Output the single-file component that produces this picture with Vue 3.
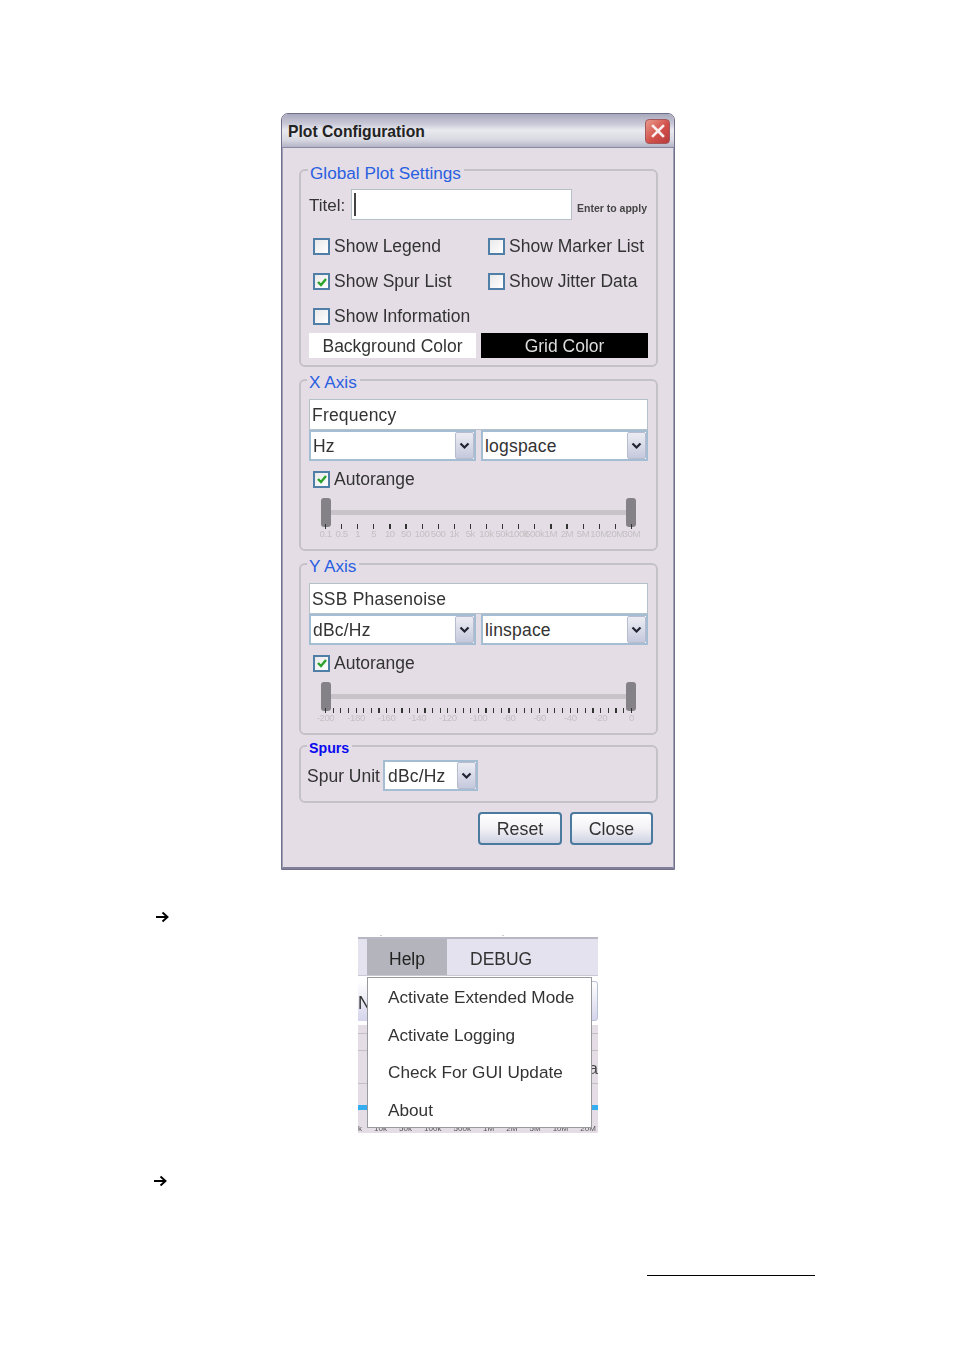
<script setup>
const xTicks = ['0.1','0.5','1','5','10','50','100','500','1k','5k','10k','50k','100k','500k','1M','2M','5M','10M','20M','30M']
const yLabels = ['-200','-180','-160','-140','-120','-100','-80','-60','-40','-20','0']
const yTicks = Array.from({ length: 41 }, (_, i) => i)
const checks = [
  { label: 'Show Legend', on: false },
  { label: 'Show Marker List', on: false },
  { label: 'Show Spur List', on: true },
  { label: 'Show Jitter Data', on: false },
  { label: 'Show Information', on: false }
]
const axisGroups = [
  { title: 'X Axis', name: 'Frequency', unit: 'Hz', scale: 'logspace', kind: 'x' },
  { title: 'Y Axis', name: 'SSB Phasenoise', unit: 'dBc/Hz', scale: 'linspace', kind: 'y' }
]
const menuItems = ['Activate Extended Mode', 'Activate Logging', 'Check For GUI Update', 'About']
const axisFrag = ['k', '10k', '50k', '100k', '500k', '1M', '2M', '5M', '10M', '20M']
</script>

<template>
  <div class="page">
    <section class="dialog">
      <header class="titlebar">
        <span class="title">Plot Configuration</span>
        <button class="close-x" aria-label="Close">
          <svg width="18" height="18" viewBox="0 0 18 18"><path d="M4 4l10 10M14 4L4 14" stroke="#fbeeee" stroke-width="2.6" stroke-linecap="square" /></svg>
        </button>
      </header>
      <div class="body">
        <fieldset class="group g-global">
          <span class="legend">Global Plot Settings</span>
          <div class="title-row">
            <span class="lbl">Titel:</span>
            <div class="field title-input"><i class="caret"></i></div>
            <span class="hint">Enter to apply</span>
          </div>
          <div class="checks">
            <label v-for="c in checks" :key="c.label" class="check">
              <span class="box">
                <svg v-if="c.on" width="12" height="12" viewBox="0 0 12 12"><path d="M2 6l3 3 5-6" fill="none" stroke="#2aa32a" stroke-width="2.4" /></svg>
              </span>
              {{ c.label }}
            </label>
          </div>
          <div class="colors">
            <div class="swatch white">Background Color</div>
            <div class="swatch black">Grid Color</div>
          </div>
        </fieldset>

        <fieldset v-for="a in axisGroups" :key="a.title" class="group g-axis">
          <span class="legend thin">{{ a.title }}</span>
          <div class="field axis-name">{{ a.name }}</div>
          <div class="selects">
            <div class="select">
              <span class="sel-text">{{ a.unit }}</span>
              <span class="sel-btn"><svg width="11" height="8" viewBox="0 0 11 8"><path d="M1.5 1.5l4 4 4-4" fill="none" stroke="#223" stroke-width="2.2" /></svg></span>
            </div>
            <div class="select">
              <span class="sel-text">{{ a.scale }}</span>
              <span class="sel-btn"><svg width="11" height="8" viewBox="0 0 11 8"><path d="M1.5 1.5l4 4 4-4" fill="none" stroke="#223" stroke-width="2.2" /></svg></span>
            </div>
          </div>
          <label class="check auto">
            <span class="box"><svg width="12" height="12" viewBox="0 0 12 12"><path d="M2 6l3 3 5-6" fill="none" stroke="#2aa32a" stroke-width="2.4" /></svg></span>
            Autorange
          </label>
          <div class="slider">
            <div class="track">
              <i class="thumb"></i>
              <i class="rail"></i>
              <i class="thumb"></i>
            </div>
            <div class="ticks">
              <template v-if="a.kind === 'x'">
                <i v-for="t in xTicks" :key="t" class="tick"></i>
              </template>
              <template v-else>
                <i v-for="t in yTicks" :key="t" class="tick"></i>
              </template>
            </div>
            <div class="tick-labels">
              <span v-for="t in (a.kind === 'x' ? xTicks : yLabels)" :key="t" class="tl"><b>{{ t }}</b></span>
            </div>
          </div>
        </fieldset>

        <fieldset class="group g-spurs">
          <span class="legend bold">Spurs</span>
          <div class="spur-row">
            <span class="lbl">Spur Unit</span>
            <div class="select spur-select">
              <span class="sel-text">dBc/Hz</span>
              <span class="sel-btn"><svg width="11" height="8" viewBox="0 0 11 8"><path d="M1.5 1.5l4 4 4-4" fill="none" stroke="#223" stroke-width="2.2" /></svg></span>
            </div>
          </div>
        </fieldset>

        <div class="actions">
          <button class="btn">Reset</button>
          <button class="btn">Close</button>
        </div>
      </div>
    </section>

    <div class="arrow first">
      <svg width="14" height="12" viewBox="0 0 14 12"><path d="M1 6h11M7.5 1.5L12.5 6l-5 4.5" fill="none" stroke="#000" stroke-width="1.9" /></svg>
    </div>

    <section class="menu-shot">
      <div class="specks"><i></i><i></i></div>
      <div class="menubar">
        <span class="tab active">Help</span>
        <span class="tab debug">DEBUG</span>
      </div>
      <div class="behind">
        <div class="frag-row">
          <span class="frag-btn left">N</span>
          <span class="frag-btn right"></span>
        </div>
        <div class="frag-panel">
          <i class="frag-line l1"></i>
          <i class="frag-line l2"></i>
          <i class="frag-line l3"></i>
          <span class="frag-a">a</span>
          <i class="frag-blue"></i>
          <div class="frag-axis"><span v-for="f in axisFrag" :key="f">{{ f }}</span></div>
        </div>
      </div>
      <ul class="popup">
        <li v-for="m in menuItems" :key="m">{{ m }}</li>
      </ul>
    </section>

    <div class="arrow second">
      <svg width="14" height="12" viewBox="0 0 14 12"><path d="M1 6h11M7.5 1.5L12.5 6l-5 4.5" fill="none" stroke="#000" stroke-width="1.9" /></svg>
    </div>

    <div class="footnote-line"></div>
  </div>
</template>

<style>
html, body { margin: 0; background: #fff; }
</style>

<style scoped>
.page {
  box-sizing: border-box;
  width: 954px;
  height: 1350px;
  padding-top: 113px;
  background: #fff;
  font-family: "Liberation Sans", Arial, sans-serif;
  color: #333;
  overflow: hidden;
}
.dialog {
  box-sizing: border-box;
  width: 394px;
  height: 757px;
  margin-left: 281px;
  border: 1px solid #70708c;
  border-radius: 7px 7px 0 0;
  background: #e4dde6;
  display: flex;
  flex-direction: column;
  filter: blur(0.3px);
}
.titlebar {
  box-sizing: border-box;
  height: 34px;
  flex: none;
  display: flex;
  align-items: center;
  justify-content: space-between;
  padding: 0 4px 0 6px;
  background: linear-gradient(#a9a9bd 0, #c9c9d8 10px, #e9e9ef 16px, #d8d8e2 26px, #b3b3c6 33px);
  border-radius: 6px 6px 0 0;
  border-bottom: 1px solid #8a8aa4;
}
.title {
  padding-top: 3px;
  font-weight: 700;
  font-size: 15.7px;
  color: #222;
}
.close-x {
  width: 25px;
  height: 25px;
  margin-top: 1px;
  padding: 0;
  display: flex;
  align-items: center;
  justify-content: center;
  border: 1px solid #a4585c;
  border-radius: 4px;
  background: linear-gradient(135deg, #e89a8c, #d2504a 55%, #b83c3c);
}
.body {
  flex: 1;
  box-sizing: border-box;
  padding: 21px 15px 0 16px;
  border: 1px solid #a0a0b4;
  border-width: 0 1px 2px 1px;
  border-bottom-color: #80809a;
}
.group {
  position: relative;
  box-sizing: border-box;
  margin: 0;
  min-width: 0;
  width: 359px;
  border: 2px solid #c4c2c6;
  border-radius: 6px;
}
.legend {
  position: absolute;
  left: 7px;
  top: -8px;
  padding: 0 3px 0 2px;
  background: #e4dde6;
  color: #2a5fe0;
  font-size: 17.2px;
  line-height: 20px;
}
.legend.thin { top: -9px; left: 6px; }
.legend.bold { top: -7px; left: 6px; font-size: 14.2px; line-height: 16px; font-weight: 700; color: #0a0aee; }
.lbl { font-size: 17.5px; }
.g-global { height: 198px; padding: 18px 8px 0 8px; }
.title-row { display: flex; align-items: center; height: 31px; }
.title-row .lbl { width: 42px; flex: none; padding-top: 3px; font-size: 17px; }
.field {
  box-sizing: border-box;
  background: #fff;
  border: 1px solid #b5c0c8;
}
.title-input {
  flex: none;
  width: 221px;
  height: 31px;
  display: flex;
  align-items: center;
  padding-left: 2px;
}
.caret { width: 1.5px; height: 23px; background: #444; }
.hint {
  flex: none;
  margin-left: 5px;
  margin-top: 6px;
  font-size: 10.5px;
  font-weight: 700;
  white-space: nowrap;
  color: #444;
}
.checks {
  display: grid;
  grid-template-columns: 175px 1fr;
  grid-auto-rows: 35px;
  padding: 9px 0 0 4px;
}
.check {
  display: flex;
  align-items: center;
  gap: 4px;
  font-size: 17.5px;
  white-space: nowrap;
}
.box {
  box-sizing: border-box;
  flex: none;
  width: 17px;
  height: 17px;
  border: 2px solid #4f7ea6;
  background: linear-gradient(135deg, #e9e9e9, #fff);
  display: flex;
  align-items: center;
  justify-content: center;
}
.colors { display: flex; gap: 5px; margin-top: -1px; }
.swatch {
  height: 25px;
  line-height: 27px;
  font-size: 17.5px;
  text-align: center;
}
.swatch.white { width: 167px; background: #fff; }
.swatch.black { width: 167px; background: #000; color: #ddd; }
.g-axis { height: 172px; margin-top: 12px; padding: 18px 8px 0 8px; }
.axis-name {
  width: 339px;
  height: 31px;
  line-height: 30px;
  padding-left: 2px;
  font-size: 17.5px;
  letter-spacing: 0.2px;
}
.selects { display: flex; gap: 5px; justify-content: space-between; width: 339px; }
.select {
  box-sizing: border-box;
  width: 167px;
  height: 31px;
  display: flex;
  align-items: center;
  justify-content: space-between;
  background: #fff;
  border: 2px solid #a5bdd2;
}
.sel-text { padding: 2px 0 0 2px; font-size: 17.5px; letter-spacing: 0.2px; }
.sel-btn {
  box-sizing: border-box;
  width: 19px;
  height: 27px;
  display: flex;
  align-items: center;
  justify-content: center;
  background: linear-gradient(#ecedf3, #c4c8dc);
  border: 1px solid #b8bcd0;
  border-radius: 2px;
}
.auto { margin: 8px 0 0 4px; height: 20px; }
.slider { width: 339px; margin-top: 9px; }
.track { display: flex; align-items: center; padding: 0 12px; height: 29px; }
.thumb { flex: none; width: 10px; height: 29px; border-radius: 3px; background: #858287; }
.rail { flex: 1; height: 5px; background: #c7c3c8; }
.ticks {
  display: flex;
  justify-content: space-between;
  padding: 0 16px;
  height: 5px;
  margin-top: -3px;
}
.tick { width: 1.2px; height: 5px; background: #333; }
.tick-labels {
  display: flex;
  justify-content: space-between;
  padding: 0 16px;
  margin-top: -1px;
  height: 12px;
}
.tl { width: 1px; display: flex; justify-content: center; white-space: nowrap; }
.tl b { font-weight: 400; font-size: 9.6px; line-height: 12px; letter-spacing: -0.4px; color: #c4c0c2; }
.g-spurs { height: 58px; margin-top: 10px; padding: 13px 0 0 6px; }
.spur-row { display: flex; align-items: center; gap: 3px; }
.spur-row .lbl { padding-top: 2px; }
.spur-select { width: 95px; }
.spur-select .sel-text { padding-left: 3px; }
.actions { display: flex; justify-content: flex-end; gap: 8px; margin-top: 9px; padding-right: 5px; }
.btn {
  box-sizing: border-box;
  width: 84px;
  height: 33px;
  padding: 1px 0 0;
  font-family: inherit;
  font-size: 17.8px;
  color: #333;
  border: 2px solid #4a7a9e;
  border-radius: 4px;
  background: linear-gradient(#fff 0, #f2f2f6 50%, #cfd2e2 100%);
}
.btn:last-child { width: 83px; }
.arrow { display: flex; height: 12px; }
.arrow.first { margin: 41px 0 0 155px; }
.arrow.second { margin: 42px 0 0 153px; }
.menu-shot {
  position: relative;
  box-sizing: border-box;
  width: 240px;
  height: 198px;
  margin: 12px 0 0 358px;
  overflow: hidden;
  filter: blur(0.3px);
}
.specks { height: 2px; display: flex; gap: 120px; padding-left: 22px; }
.specks i { width: 2px; height: 1px; background: #ccc; }
.menubar {
  box-sizing: border-box;
  height: 39px;
  display: flex;
  padding-left: 9px;
  background: #e4e2ee;
  border-top: 2px solid #b8b8c4;
  border-bottom: 1px solid #c9c9d2;
}
.tab { line-height: 41px; font-size: 17.5px; }
.tab.active { width: 80px; background: #b4b4bc; text-align: center; color: #222; }
.tab.debug { margin-left: 23px; }
.behind { background: #fff; height: 157px; }
.frag-row { display: flex; justify-content: space-between; height: 49px; padding-top: 5px; box-sizing: border-box; }
.frag-btn {
  box-sizing: border-box;
  width: 20px;
  height: 40px;
  font-size: 17.5px;
  line-height: 44px;
  background: linear-gradient(#fff, #d4d4ec);
}
.frag-btn.left { text-align: right; padding-right: 10px; }
.frag-btn.right { border: 1px solid #b8c0d4; border-radius: 3px; }
.frag-panel { position: relative; height: 108px; background: #e4dde6; }
.frag-line { position: absolute; left: 0; right: 0; height: 1px; background: #c2c0c4; }
.l1 { top: 8px; }
.l2 { top: 25px; }
.l3 { top: 58px; }
.frag-a { position: absolute; right: 0; top: 34px; font-size: 17px; color: #444; }
.frag-blue { position: absolute; left: 0; right: 0; top: 80px; height: 5px; background: #34aef0; }
.frag-axis {
  position: absolute;
  left: 0;
  right: 2px;
  top: 99px;
  display: flex;
  justify-content: space-between;
  font-size: 8px;
  line-height: 10px;
  color: #555;
}
.popup {
  position: absolute;
  left: 9px;
  top: 42px;
  box-sizing: border-box;
  width: 225px;
  height: 151px;
  margin: 0;
  padding: 1px 0 0 20px;
  list-style: none;
  background: #fff;
  border: 1px solid #9a9a9e;
}
.popup li { height: 37.6px; line-height: 37.6px; font-size: 17.2px; white-space: nowrap; }
.footnote-line { width: 168px; height: 1px; margin: 88px 0 0 647px; background: #000; }
</style>
